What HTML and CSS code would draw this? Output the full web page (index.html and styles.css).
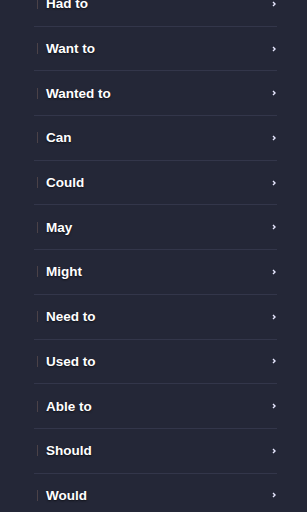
FILE: index.html
```html
<!DOCTYPE html>
<html lang="en">
<head>
    <meta charset="UTF-8">
    <meta name="viewport" content="width=device-width, initial-scale=1.0">
    <title>Modal Verbs</title>
    <link rel="stylesheet" href="styles.css">
</head>
<body>
    <ul class="verb-list">
        <li class="verb-item"><span class="verb-mark"></span><span class="verb-name">Had to</span><svg class="chevron" viewBox="0 0 4 6"><path d="M1 1l2 2-2 2"/></svg></li>
        <li class="verb-item"><span class="verb-mark"></span><span class="verb-name">Want to</span><svg class="chevron" viewBox="0 0 4 6"><path d="M1 1l2 2-2 2"/></svg></li>
        <li class="verb-item"><span class="verb-mark"></span><span class="verb-name">Wanted to</span><svg class="chevron" viewBox="0 0 4 6"><path d="M1 1l2 2-2 2"/></svg></li>
        <li class="verb-item"><span class="verb-mark"></span><span class="verb-name">Can</span><svg class="chevron" viewBox="0 0 4 6"><path d="M1 1l2 2-2 2"/></svg></li>
        <li class="verb-item"><span class="verb-mark"></span><span class="verb-name">Could</span><svg class="chevron" viewBox="0 0 4 6"><path d="M1 1l2 2-2 2"/></svg></li>
        <li class="verb-item"><span class="verb-mark"></span><span class="verb-name">May</span><svg class="chevron" viewBox="0 0 4 6"><path d="M1 1l2 2-2 2"/></svg></li>
        <li class="verb-item"><span class="verb-mark"></span><span class="verb-name">Might</span><svg class="chevron" viewBox="0 0 4 6"><path d="M1 1l2 2-2 2"/></svg></li>
        <li class="verb-item"><span class="verb-mark"></span><span class="verb-name">Need to</span><svg class="chevron" viewBox="0 0 4 6"><path d="M1 1l2 2-2 2"/></svg></li>
        <li class="verb-item"><span class="verb-mark"></span><span class="verb-name">Used to</span><svg class="chevron" viewBox="0 0 4 6"><path d="M1 1l2 2-2 2"/></svg></li>
        <li class="verb-item"><span class="verb-mark"></span><span class="verb-name">Able to</span><svg class="chevron" viewBox="0 0 4 6"><path d="M1 1l2 2-2 2"/></svg></li>
        <li class="verb-item"><span class="verb-mark"></span><span class="verb-name">Should</span><svg class="chevron" viewBox="0 0 4 6"><path d="M1 1l2 2-2 2"/></svg></li>
        <li class="verb-item"><span class="verb-mark"></span><span class="verb-name">Would</span><svg class="chevron" viewBox="0 0 4 6"><path d="M1 1l2 2-2 2"/></svg></li>
    </ul>
</body>
</html>
```

FILE: styles.css
```css
* {
    margin: 0;
    padding: 0;
    box-sizing: border-box;
    font-family: "Liberation Sans", Arial, sans-serif;
}

body {
    background-color: #242737;
    color: #FFFFFF;
    padding: 0 30px 0 34px;
    overflow: hidden;
}

.verb-list {
    list-style: none;
    margin-top: -18px;
}

.verb-item {
    display: flex;
    align-items: center;
    height: 44.7px;
    border-bottom: 1px solid #33364A;
    padding: 0 1px 0 3px;
}

.verb-mark {
    width: 1px;
    height: 11px;
    background-color: #4B4248;
    margin-right: 8px;
}

.verb-name {
    flex: 1;
    font-size: 13.5px;
    font-weight: 700;
    text-shadow: 0 1px 2px rgba(0, 0, 0, 0.6);
}

.chevron {
    width: 4px;
    height: 6px;
    fill: none;
    stroke: #E8E8FF;
    stroke-width: 1.4;
}
```
